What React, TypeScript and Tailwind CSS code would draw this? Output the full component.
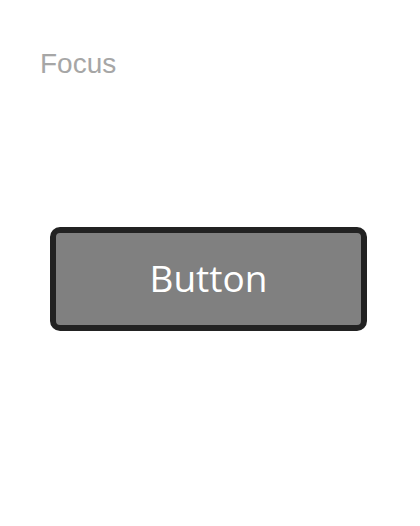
export default function App() {
  return (
    <div className="flex h-[526px] w-[420px] flex-col bg-white">
      <div className="pl-[40px] pt-[47px] font-['Liberation_Sans',Arial,sans-serif] text-[28px] leading-[34px] text-[#a6a6a6]">
        Focus
      </div>
      <div className="pl-[50px] pt-[146px]">
        <button className="flex h-[104px] w-[317px] items-center justify-center rounded-[10px] border-[6px] border-[#222222] bg-[#808080] pb-[2px] font-['Open_Sans','Noto_Sans',sans-serif] text-[37px] text-white">
          Button
        </button>
      </div>
    </div>
  );
}
